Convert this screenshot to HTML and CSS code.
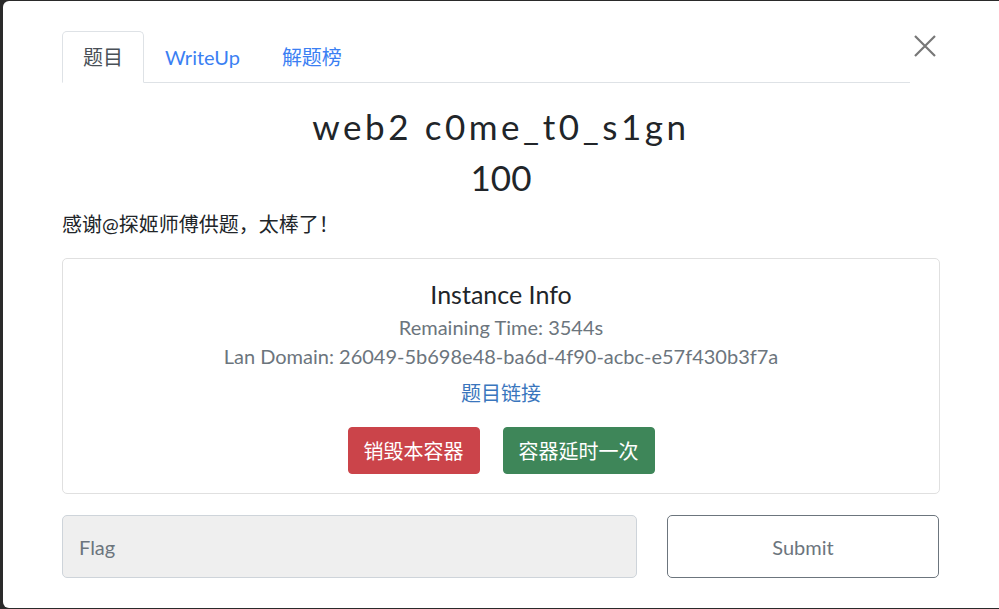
FILE: index.html
```html
<!DOCTYPE html>
<html lang="zh-CN">
<head>
<meta charset="utf-8">
<title>web2 c0me_t0_s1gn</title>
<link rel="stylesheet" href="styles.css">
</head>
<body>
<div class="modal">
  <div class="modal-head">
    <ul class="tabs">
      <li class="tab active">题目</li>
      <li class="tab">WriteUp</li>
      <li class="tab">解题榜</li>
    </ul>
    <button class="close" aria-label="Close">
      <svg width="22" height="22" viewBox="0 0 22 22"><path d="M1 1 L21 21 M21 1 L1 21" stroke="#777" stroke-width="2.2" fill="none"/></svg>
    </button>
  </div>
  <h3 class="challenge-name">web2 c0me_t0_s1gn</h3>
  <h4 class="challenge-value">100</h4>
  <p class="desc">感谢@探姬师傅供题，太棒了！</p>
  <div class="card">
    <h5 class="card-title">Instance Info</h5>
    <p class="card-sub">Remaining Time: 3544s</p>
    <p class="card-sub">Lan Domain: 26049-5b698e48-ba6d-4f90-acbc-e57f430b3f7a</p>
    <p class="card-link"><a href="#">题目链接</a></p>
    <div class="btn-row">
      <button class="btn btn-danger">销毁本容器</button>
      <button class="btn btn-success">容器延时一次</button>
    </div>
  </div>
  <div class="submit-row">
    <input class="flag-input" type="text" placeholder="Flag">
    <button class="submit-btn">Submit</button>
  </div>
</div>
</body>
</html>
```

FILE: styles.css
```css
html, body {
  margin: 0;
  padding: 0;
  height: 100%;
}
body {
  background: #2a2a2a;
  font-family: Lato, "Noto Sans CJK SC", sans-serif;
  font-size: 20px;
  line-height: 1.5;
  color: #212529;
  overflow: hidden;
}
.modal {
  margin: 1px 0 0 3px;
  background: #fff;
  border-radius: 6px 0 0 6px;
  height: 607px;
  box-sizing: border-box;
  padding: 30px 59px 0 59px;
}
.modal-head {
  display: flex;
  align-items: flex-start;
}
.tabs {
  flex: 1;
  list-style: none;
  margin: 0;
  padding: 0;
  display: flex;
  border-bottom: 1px solid #dee2e6;
}
.tab {
  padding: 10px 20px;
  line-height: 30px;
  color: #3b7ff3;
  border: 1px solid transparent;
  border-top-left-radius: 5px;
  border-top-right-radius: 5px;
  margin-bottom: -1px;
}
.tab.active {
  color: #495057;
  border-color: #dee2e6 #dee2e6 #fff;
}
.close {
  width: 30px;
  height: 30px;
  padding: 0;
  margin-top: 0;
  border: 0;
  background: transparent;
  display: flex;
  align-items: center;
  justify-content: center;
}
.challenge-name {
  margin: 22px 0 0;
  text-align: center;
  font-size: 35px;
  font-weight: 400;
  line-height: 42px;
  letter-spacing: 3.55px;
}
.challenge-value {
  margin: 9px 0 0;
  text-align: center;
  font-size: 35px;
  font-weight: 400;
  line-height: 42px;
}
.desc {
  margin: 11px 0 19px;
  font-size: 20px;
  line-height: 30px;
}
.card {
  border: 1px solid #e0e0e0;
  border-radius: 5px;
  padding: 20px 20px 19px;
  text-align: center;
}
.card-title {
  margin: 0;
  font-size: 25px;
  font-weight: 400;
  line-height: 30px;
}
.card-sub {
  margin: 0;
  color: #6c757d;
  font-size: 20px;
  line-height: 29px;
}
.card-sub:first-of-type {
  margin-top: 4px;
}
.card-link {
  margin: 7px 0 0;
  line-height: 30px;
}
.card-link a {
  color: #3a76bd;
  text-decoration: none;
}
.btn-row {
  display: flex;
  justify-content: center;
  gap: 23px;
  margin-top: 19px;
}
.btn {
  font-family: inherit;
  font-size: 20px;
  line-height: 30px;
  height: 47px;
  padding: 0 15px;
  border: 1px solid transparent;
  border-radius: 4px;
  color: #fff;
}
.btn-danger {
  background: #cb444a;
  border-color: #cb444a;
}
.btn-success {
  background: #3e8659;
  border-color: #3e8659;
}
.submit-row {
  display: grid;
  grid-template-columns: 575px 1fr;
  gap: 30px;
  margin-top: 21px;
  padding-right: 1px;
}
.flag-input {
  height: 63px;
  box-sizing: border-box;
  background: #efefef;
  border: 1px solid #ced4da;
  border-radius: 5px;
  padding: 0 16px;
  font-family: inherit;
  font-size: 20px;
  color: #495057;
}
.flag-input::placeholder {
  color: #6c757d;
}
.submit-btn {
  height: 63px;
  box-sizing: border-box;
  background: #fff;
  border: 1px solid #6c757d;
  border-radius: 5px;
  font-family: inherit;
  font-size: 20px;
  color: #6c757d;
}
```
